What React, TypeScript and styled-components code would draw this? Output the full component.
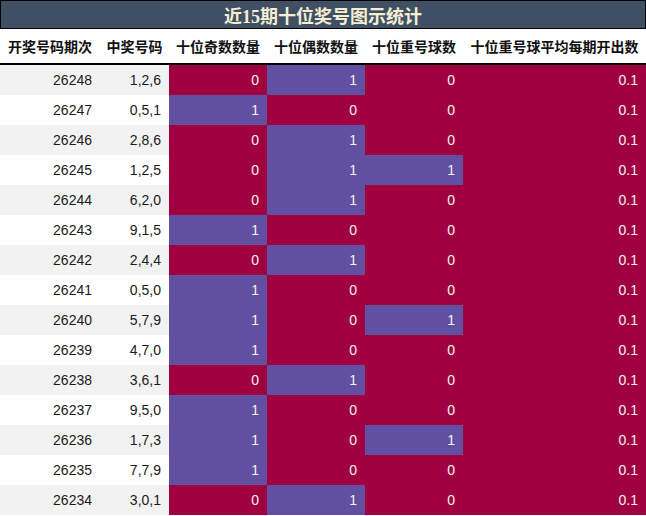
import React from "react";
import styled, { createGlobalStyle } from "styled-components";

const Global = createGlobalStyle`
  html, body { margin: 0; padding: 0; background: #ffffff; }
  body { font-family: "Liberation Sans", "Noto Sans CJK SC", sans-serif; }
`;

const COLS = "100px 69px 98px 98px 98px 183px";
const RED = "#a0003f";
const PURPLE = "#6150a1";

const Wrap = styled.div`
  width: 646px;
`;

const Title = styled.div`
  box-sizing: border-box;
  height: 29px;
  border: 1px solid #000;
  background: #405064;
  color: #f5eed2;
  font-family: "Liberation Serif", "Noto Sans CJK SC", serif;
  font-weight: bold;
  font-size: 18px;
  display: flex;
  align-items: center;
  justify-content: center;
`;

const HeaderRow = styled.div`
  display: grid;
  grid-template-columns: ${COLS};
  height: 34px;
  border-bottom: 2px solid #000;
`;

const HeadCell = styled.div`
  display: flex;
  align-items: center;
  justify-content: center;
  font-weight: bold;
  font-size: 14px;
  color: #111;
  white-space: nowrap;
`;

const Row = styled.div<{ $alt: boolean }>`
  display: grid;
  grid-template-columns: ${COLS};
  height: 30px;
  background: ${(p) => (p.$alt ? "#f2f2f2" : "#ffffff")};
`;

const Cell = styled.div<{ $bg?: string }>`
  display: flex;
  align-items: center;
  justify-content: flex-end;
  padding-right: 8px;
  font-size: 14px;
  color: ${(p) => (p.$bg ? "#f2f2f2" : "#1a1a1a")};
  background: ${(p) => p.$bg ?? "transparent"};
`;

const data: [string, string, number, number, number][] = [
  ["26248", "1,2,6", 0, 1, 0],
  ["26247", "0,5,1", 1, 0, 0],
  ["26246", "2,8,6", 0, 1, 0],
  ["26245", "1,2,5", 0, 1, 1],
  ["26244", "6,2,0", 0, 1, 0],
  ["26243", "9,1,5", 1, 0, 0],
  ["26242", "2,4,4", 0, 1, 0],
  ["26241", "0,5,0", 1, 0, 0],
  ["26240", "5,7,9", 1, 0, 1],
  ["26239", "4,7,0", 1, 0, 0],
  ["26238", "3,6,1", 0, 1, 0],
  ["26237", "9,5,0", 1, 0, 0],
  ["26236", "1,7,3", 1, 0, 1],
  ["26235", "7,7,9", 1, 0, 0],
  ["26234", "3,0,1", 0, 1, 0],
];

const headers = [
  "开奖号码期次",
  "中奖号码",
  "十位奇数数量",
  "十位偶数数量",
  "十位重号球数",
  "十位重号球平均每期开出数",
];

const colorFor = (v: number) => (v === 1 ? PURPLE : RED);

export default function App() {
  return (
    <Wrap>
      <Global />
      <Title>近15期十位奖号图示统计</Title>
      <HeaderRow>
        {headers.map((h) => (
          <HeadCell key={h}>{h}</HeadCell>
        ))}
      </HeaderRow>
      {data.map(([issue, nums, odd, even, rep], i) => (
        <Row key={issue} $alt={i % 2 === 0}>
          <Cell>{issue}</Cell>
          <Cell>{nums}</Cell>
          <Cell $bg={colorFor(odd)}>{odd}</Cell>
          <Cell $bg={colorFor(even)}>{even}</Cell>
          <Cell $bg={colorFor(rep)}>{rep}</Cell>
          <Cell $bg={RED}>0.1</Cell>
        </Row>
      ))}
    </Wrap>
  );
}
